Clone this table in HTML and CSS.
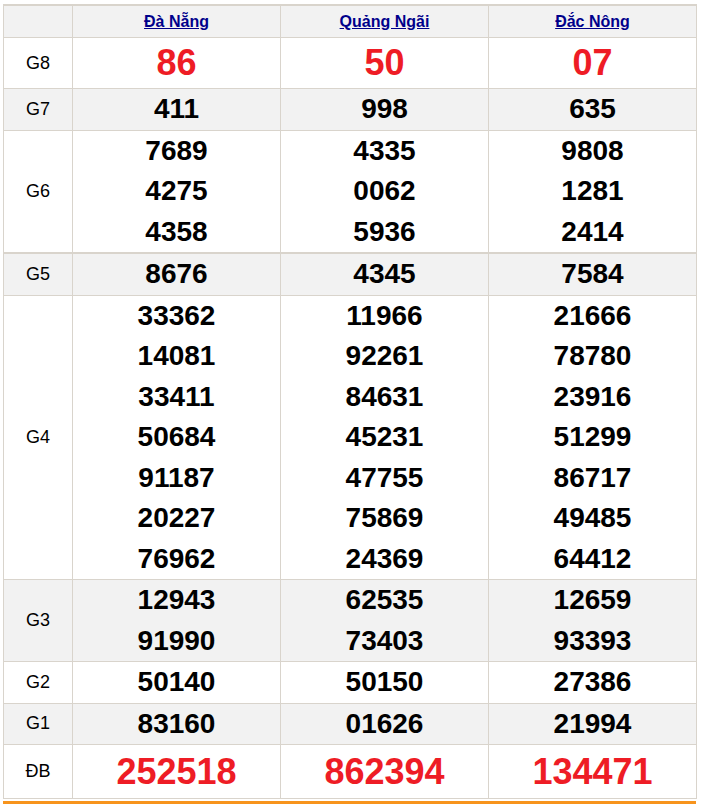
FILE: index.html
```html
<!DOCTYPE html>
<html lang="vi">
<head>
<meta charset="utf-8">
<title>Kết quả xổ số</title>
<link rel="stylesheet" href="styles.css">
</head>
<body>
<div class="wrap">
<table class="kq">
  <colgroup><col class="c-label"><col class="c-prov"><col class="c-prov"><col class="c-prov"></colgroup>
  <thead>
    <tr class="head gray">
      <th></th>
      <th><a href="#">Đà Nẵng</a></th>
      <th><a href="#">Quảng Ngãi</a></th>
      <th><a href="#">Đắc Nông</a></th>
    </tr>
  </thead>
  <tbody>
    <tr class="g8">
      <td class="lbl">G8</td>
      <td><div class="big">86</div></td>
      <td><div class="big">50</div></td>
      <td><div class="big">07</div></td>
    </tr>
    <tr class="gray">
      <td class="lbl">G7</td>
      <td><div class="n">411</div></td>
      <td><div class="n">998</div></td>
      <td><div class="n">635</div></td>
    </tr>
    <tr>
      <td class="lbl">G6</td>
      <td><div class="n">7689</div><div class="n">4275</div><div class="n">4358</div></td>
      <td><div class="n">4335</div><div class="n">0062</div><div class="n">5936</div></td>
      <td><div class="n">9808</div><div class="n">1281</div><div class="n">2414</div></td>
    </tr>
    <tr class="gray g5">
      <td class="lbl">G5</td>
      <td><div class="n">8676</div></td>
      <td><div class="n">4345</div></td>
      <td><div class="n">7584</div></td>
    </tr>
    <tr>
      <td class="lbl">G4</td>
      <td><div class="n">33362</div><div class="n">14081</div><div class="n">33411</div><div class="n">50684</div><div class="n">91187</div><div class="n">20227</div><div class="n">76962</div></td>
      <td><div class="n">11966</div><div class="n">92261</div><div class="n">84631</div><div class="n">45231</div><div class="n">47755</div><div class="n">75869</div><div class="n">24369</div></td>
      <td><div class="n">21666</div><div class="n">78780</div><div class="n">23916</div><div class="n">51299</div><div class="n">86717</div><div class="n">49485</div><div class="n">64412</div></td>
    </tr>
    <tr class="gray">
      <td class="lbl">G3</td>
      <td><div class="n">12943</div><div class="n">91990</div></td>
      <td><div class="n">62535</div><div class="n">73403</div></td>
      <td><div class="n">12659</div><div class="n">93393</div></td>
    </tr>
    <tr>
      <td class="lbl">G2</td>
      <td><div class="n">50140</div></td>
      <td><div class="n">50150</div></td>
      <td><div class="n">27386</div></td>
    </tr>
    <tr class="gray">
      <td class="lbl">G1</td>
      <td><div class="n">83160</div></td>
      <td><div class="n">01626</div></td>
      <td><div class="n">21994</div></td>
    </tr>
    <tr class="db">
      <td class="lbl">ĐB</td>
      <td><div class="big">252518</div></td>
      <td><div class="big">862394</div></td>
      <td><div class="big">134471</div></td>
    </tr>
  </tbody>
</table>
</div>
</body>
</html>
```

FILE: styles.css
```css
html, body {
  margin: 0;
  padding: 0;
  background: #fff;
}
body {
  padding: 4px 0 0 3px;
  font-family: "Liberation Sans", Arial, sans-serif;
}
.wrap {
  width: 693px;
  border-bottom: 3px solid #f7941d;
  padding-bottom: 2px;
}
.kq {
  width: 693px;
  table-layout: fixed;
  border-collapse: collapse;
  border-top: 2px solid #d9d4cc;
}
.c-label { width: 69px; }
.c-prov { width: 208px; }
.kq th, .kq td {
  border: 1px solid #d9d4cc;
  padding: 0;
  text-align: center;
  vertical-align: middle;
}
.gray th, .gray td { background: #f2f2f2; }
.head th {
  height: 31px;
  font-size: 16px;
  font-weight: bold;
}
.head a {
  color: #00008b;
  text-decoration: underline;
}
.lbl {
  font-size: 18px;
  color: #000;
}
.n {
  font-size: 28px;
  font-weight: bold;
  line-height: 40.5px;
  color: #000;
}
.big {
  font-size: 36px;
  font-weight: bold;
  color: #ee1c25;
}
.g8 td { height: 50px; }
.db td { height: 53px; }
.g5 td { border-top-width: 2px; }
```
